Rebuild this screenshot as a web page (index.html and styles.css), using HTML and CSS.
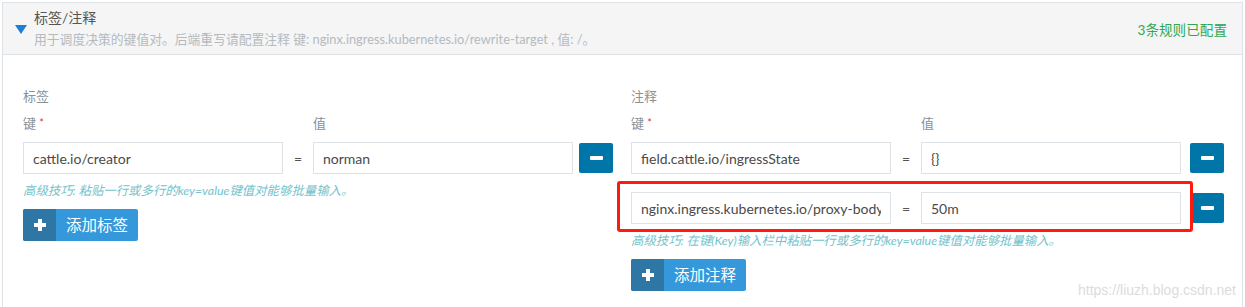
FILE: index.html
```html
<!DOCTYPE html>
<html lang="zh-CN">
<head>
  <meta charset="UTF-8">
  <title>标签/注释</title>
  <link rel="stylesheet" href="styles.css">
</head>
<body>

  <div class="accordion">
    <div class="acc-header">
      <span class="caret"></span>
      <div class="acc-title">
        <h4>标签/注释</h4>
        <p>用于调度决策的键值对。后端重写请配置注释 键: nginx.ingress.kubernetes.io/rewrite-target , 值: /。</p>
      </div>
      <span class="acc-status">3条规则已配置</span>
    </div>

    <div class="acc-body">
      <!-- labels -->
      <div class="kv-section">
        <div class="section-title">标签</div>
        <div class="kv-grid kv-head">
          <span>键 <i class="req">*</i></span>
          <span></span>
          <span>值</span>
        </div>
        <div class="kv-grid kv-row">
          <input type="text" value="cattle.io/creator">
          <span class="eq">=</span>
          <input type="text" value="norman">
          <button class="btn-remove"><span></span></button>
        </div>
        <p class="hint">高级技巧: 粘贴一行或多行的key=value键值对能够批量输入。</p>
        <button class="btn-add"><span class="plus"></span><span class="add-text">添加标签</span></button>
      </div>

      <!-- annotations -->
      <div class="kv-section">
        <div class="section-title">注释</div>
        <div class="kv-grid kv-head">
          <span>键 <i class="req">*</i></span>
          <span></span>
          <span>值</span>
        </div>
        <div class="kv-grid kv-row">
          <input type="text" value="field.cattle.io/ingressState">
          <span class="eq">=</span>
          <input type="text" value="{}">
          <button class="btn-remove"><span></span></button>
        </div>
        <div class="kv-grid kv-row marked">
          <input type="text" value="nginx.ingress.kubernetes.io/proxy-body-size">
          <span class="eq">=</span>
          <input type="text" value="50m">
          <button class="btn-remove"><span></span></button>
          <div class="mark-box"></div>
        </div>
        <p class="hint">高级技巧: 在键(Key)输入栏中粘贴一行或多行的key=value键值对能够批量输入。</p>
        <button class="btn-add"><span class="plus"></span><span class="add-text">添加注释</span></button>
      </div>
    </div>
  </div>

  <div class="watermark">https://liuzh.blog.csdn.net</div>

</body>
</html>
```

FILE: styles.css
```css
body {
  margin: 0;
  font-family: Lato, "Noto Sans CJK SC", sans-serif;
  color: #4d4d4d;
  background: #fff;
  height: 307px;
  overflow: hidden;
  position: relative;
}

.accordion {
  margin: 2px 2px 0;
  border: 1px solid #dde3e6;
  border-bottom: none;
  height: 305px;
}

.acc-header {
  display: flex;
  align-items: center;
  background-color: #f5f5f5;
  border-bottom: 1px solid #dde3e6;
  padding: 5px 15px 7px 12px;
}

.caret {
  width: 0;
  height: 0;
  border-left: 6px solid transparent;
  border-right: 6px solid transparent;
  border-top: 9px solid #1d7ed3;
  margin-top: 3px;
  margin-right: 7px;
}

.acc-title {
  flex: 1;
}

.acc-title h4 {
  margin: 0;
  font-size: 14px;
  line-height: 20px;
  font-weight: normal;
  color: #555;
}

.acc-title p {
  margin: 3px 0 0;
  font-size: 12.8px;
  line-height: 16px;
  color: #b4bac0;
}

.acc-status {
  font-size: 13.6px;
  color: #30a852;
  margin-top: 2px;
}

.acc-body {
  display: grid;
  grid-template-columns: 590px 593px;
  column-gap: 18px;
  padding: 31px 20px 0;
}

.section-title {
  font-size: 13px;
  line-height: 20px;
  color: #8a9097;
  margin-bottom: 7px;
}

.kv-grid {
  display: grid;
  grid-template-columns: 260px 30px 260px 1fr;
  align-items: center;
}

.kv-head {
  font-size: 13px;
  line-height: 20px;
  color: #8a9097;
  margin-bottom: 9px;
}

.req {
  color: #e5403a;
  font-style: normal;
  font-size: 11px;
  vertical-align: top;
}

.kv-row {
  height: 32px;
}

.kv-row + .kv-row {
  margin-top: 18px;
}

.kv-row input {
  box-sizing: border-box;
  height: 32px;
  width: 100%;
  border: 1px solid #dde3e6;
  padding: 0 9px;
  font-family: inherit;
  font-size: 14px;
  color: #4a4a4a;
  background: #fff;
  outline: none;
}

.eq {
  text-align: center;
  font-size: 14px;
  color: #555;
}

.btn-remove {
  justify-self: end;
  width: 34px;
  height: 30px;
  border: none;
  border-radius: 2px;
  background-color: #0075a8;
  display: flex;
  align-items: center;
  justify-content: center;
  padding: 0;
  cursor: pointer;
}

.btn-remove span {
  display: block;
  width: 13px;
  height: 4px;
  border-radius: 1px;
  background: #fff;
}

.marked {
  position: relative;
}

.mark-box {
  position: absolute;
  left: -14px;
  top: -11px;
  width: 570px;
  height: 45px;
  border: 3px solid #ff1a10;
  border-radius: 3px;
  pointer-events: none;
}

.hint {
  margin: 8px 0 0;
  font-size: 12.4px;
  line-height: 17px;
  font-style: italic;
  color: #74c3cc;
}

.btn-add {
  display: flex;
  margin-top: 10px;
  height: 32px;
  padding: 0;
  border: none;
  border-radius: 2px;
  overflow: hidden;
  background-color: #3498db;
  color: #fff;
  cursor: pointer;
  font-family: inherit;
}

.btn-add .plus {
  width: 33px;
  background-color: #2e77a4;
  position: relative;
}

/* plus sign drawn with two bars */
.btn-add .plus::before,
.btn-add .plus::after {
  content: "";
  position: absolute;
  left: 50%;
  top: 50%;
  background: #fff;
}

.btn-add .plus::before {
  width: 12px;
  height: 4px;
  margin: -2px 0 0 -6px;
}

.btn-add .plus::after {
  width: 4px;
  height: 12px;
  margin: -6px 0 0 -2px;
}

.btn-add .add-text {
  padding: 0 10px;
  font-size: 15.5px;
  line-height: 32px;
}

.watermark {
  position: absolute;
  right: 9px;
  bottom: 9px;
  font-family: "Liberation Sans", Arial, sans-serif;
  font-size: 14px;
  color: #dcdcdc;
}
```
